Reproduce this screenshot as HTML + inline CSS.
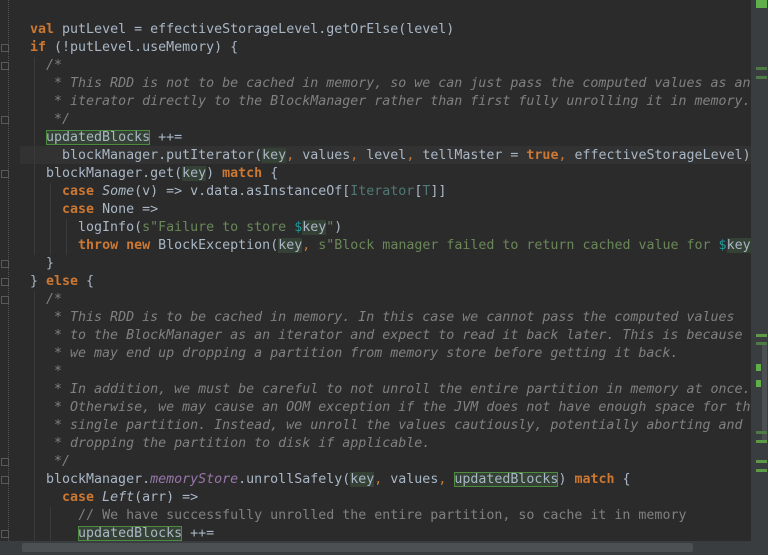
<!DOCTYPE html>
<html><head><meta charset="utf-8"><style>
html,body{margin:0;padding:0;background:#2b2b2b;width:768px;height:555px;overflow:hidden}
#ed{position:absolute;left:0;top:0;width:751px;height:541px;overflow:hidden;background:#2b2b2b}
.l{position:absolute;left:30px;margin-top:2px;height:18px;line-height:18px;white-space:pre;font-family:"DejaVu Sans Mono","Liberation Mono",monospace;font-size:13.3px;color:#a9b7c6}
.k{color:#cc7832;font-weight:bold}
.c{color:#808080;font-style:italic}
.lc{color:#808080}
.s{color:#6a8759}
.d{color:#20999d}
.i{font-style:italic}
.f{color:#9876aa;font-style:italic}
.t{color:#507874}
.h{background:#344134}
.b{background:#344134;outline:1px solid #4e8a3f;outline-offset:-1px}
.cur{position:absolute;left:20px;top:146px;width:731px;height:18px;background:#323232}
.g{position:absolute;left:8px;top:0;width:0;height:541px;border-left:1px dotted #555}
.fm{position:absolute;left:1px;width:8px;height:8px;border:1px solid #5a5a5a;background:#2b2b2b;box-sizing:border-box;margin-top:2px}
.ig{position:absolute;width:0;border-left:1px solid #3b3b3b;margin-top:2px}
#rs{position:absolute;left:751px;top:0;width:17px;height:555px;background:#3a3d3f}
.m{position:absolute;left:756px;width:11px;height:3px;background:#4e7a45}
#hs{position:absolute;left:0;top:541px;width:751px;height:14px;background:#3a3d3f}
#ht{position:absolute;left:22px;top:543px;width:671px;height:9px;background:#4d5052;border-radius:2px}
</style></head><body>
<div id="ed">
<div class="cur"></div>
<div class="g"></div>
<div class="ig" style="left:34px;top:55px;height:198px"></div>
<div class="ig" style="left:50px;top:181px;height:72px"></div>
<div class="ig" style="left:66px;top:217px;height:36px"></div>
<div class="ig" style="left:34px;top:289px;height:252px"></div>
<div class="ig" style="left:50px;top:505px;height:36px"></div>
<div class="fm" style="top:42px"></div>
<div class="fm" style="top:60px"></div>
<div class="fm" style="top:114px"></div>
<div class="fm" style="top:168px"></div>
<div class="fm" style="top:258px"></div>
<div class="fm" style="top:276px"></div>
<div class="fm" style="top:294px"></div>
<div class="fm" style="top:456px"></div>
<div class="fm" style="top:474px"></div>
<div class="fm" style="top:528px"></div>

<div class="l" style="top:19px"><span class="k">val</span> putLevel = effectiveStorageLevel.getOrElse(level)</div>
<div class="l" style="top:37px"><span class="k">if</span> (!putLevel.useMemory) {</div>
<div class="l" style="top:55px">  <span class="c">/*</span></div>
<div class="l" style="top:73px">  <span class="c"> * This RDD is not to be cached in memory, so we can just pass the computed values as an</span></div>
<div class="l" style="top:91px">  <span class="c"> * iterator directly to the BlockManager rather than first fully unrolling it in memory.</span></div>
<div class="l" style="top:109px">  <span class="c"> */</span></div>
<div class="l" style="top:127px">  <span class="b">updatedBlocks</span> ++=</div>
<div class="l" style="top:145px">    blockManager.putIterator(<span class="h">key</span><span class="k" style="font-weight:normal">,</span> values<span class="k" style="font-weight:normal">,</span> level<span class="k" style="font-weight:normal">,</span> tellMaster = <span class="k">true</span><span class="k" style="font-weight:normal">,</span> effectiveStorageLevel)</div>
<div class="l" style="top:163px">  blockManager.get(<span class="h">key</span>) <span class="k">match</span> {</div>
<div class="l" style="top:181px">    <span class="k">case</span> <span class="i">Some</span>(v) =&gt; v.data.asInstanceOf[<span class="t">Iterator</span>[<span class="t">T</span>]]</div>
<div class="l" style="top:199px">    <span class="k">case</span> None =&gt;</div>
<div class="l" style="top:217px">      logInfo(<span class="s">s"Failure to store </span><span class="d">$</span><span class="h">key</span><span class="s">"</span>)</div>
<div class="l" style="top:235px">      <span class="k">throw new</span> BlockException(<span class="h">key</span><span class="k" style="font-weight:normal">,</span> <span class="s">s"Block manager failed to return cached value for </span><span class="d">$</span><span class="h">key</span><span class="s">"</span>)</div>
<div class="l" style="top:253px">  }</div>
<div class="l" style="top:271px">} <span class="k">else</span> {</div>
<div class="l" style="top:289px">  <span class="c">/*</span></div>
<div class="l" style="top:307px">  <span class="c"> * This RDD is to be cached in memory. In this case we cannot pass the computed values</span></div>
<div class="l" style="top:325px">  <span class="c"> * to the BlockManager as an iterator and expect to read it back later. This is because</span></div>
<div class="l" style="top:343px">  <span class="c"> * we may end up dropping a partition from memory store before getting it back.</span></div>
<div class="l" style="top:361px">  <span class="c"> *</span></div>
<div class="l" style="top:379px">  <span class="c"> * In addition, we must be careful to not unroll the entire partition in memory at once.</span></div>
<div class="l" style="top:397px">  <span class="c"> * Otherwise, we may cause an OOM exception if the JVM does not have enough space for this</span></div>
<div class="l" style="top:415px">  <span class="c"> * single partition. Instead, we unroll the values cautiously, potentially aborting and</span></div>
<div class="l" style="top:433px">  <span class="c"> * dropping the partition to disk if applicable.</span></div>
<div class="l" style="top:451px">  <span class="c"> */</span></div>
<div class="l" style="top:469px">  blockManager.<span class="f">memoryStore</span>.unrollSafely(<span class="h">key</span><span class="k" style="font-weight:normal">,</span> values<span class="k" style="font-weight:normal">,</span> <span class="b">updatedBlocks</span>) <span class="k">match</span> {</div>
<div class="l" style="top:487px">    <span class="k">case</span> <span class="i">Left</span>(arr) =&gt;</div>
<div class="l" style="top:505px">      <span class="lc">// We have successfully unrolled the entire partition, so cache it in memory</span></div>
<div class="l" style="top:523px">      <span class="b">updatedBlocks</span> ++=</div>
</div>
<div id="rs"></div>
<div style="position:absolute;left:756px;top:0;width:11px;height:8px;background:#5fb04a"></div>
<div class="m" style="top:67px"></div>
<div class="m" style="top:76px"></div>
<div style="position:absolute;left:762px;top:345px;width:5px;height:95px;background:#4d5052"></div>
<div class="m" style="top:334px;background:#5c9a48"></div>
<div class="m" style="top:342px"></div>
<div style="position:absolute;left:756px;top:364px;width:5px;height:7px;background:#5fb04a"></div>
<div style="position:absolute;left:756px;top:380px;width:5px;height:7px;background:#5fb04a"></div>
<div class="m" style="top:431px"></div>
<div class="m" style="top:440px;background:#5c9a48"></div>
<div class="m" style="top:460px;background:#5c9a48"></div>
<div class="m" style="top:469px;background:#5c9a48"></div>
<div id="hs"></div>
<div id="ht"></div>
</body></html>
